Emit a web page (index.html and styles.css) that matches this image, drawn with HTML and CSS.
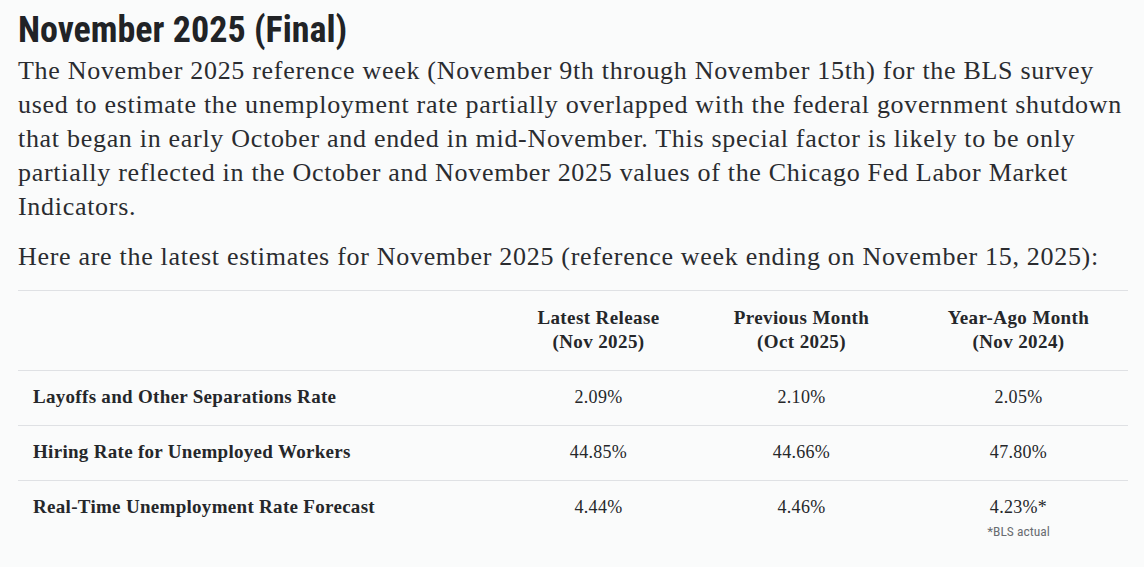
FILE: index.html
```html
<!DOCTYPE html>
<html lang="en">
<head>
<meta charset="utf-8">
<title>November 2025 (Final)</title>
<link rel="stylesheet" href="styles.css">
</head>
<body>
<main class="page">
  <h2 class="title">November 2025 (Final)</h2>
  <p class="lead">The November 2025 reference week (November 9th through November 15th) for the BLS survey used to estimate the unemployment rate partially overlapped with the federal government shutdown that began in early October and ended in mid-November. This special factor is likely to be only partially reflected in the October and November 2025 values of the Chicago Fed Labor Market Indicators.</p>
  <p class="lead intro">Here are the latest estimates for November 2025 (reference week ending on November 15, 2025):</p>
  <table class="data">
    <colgroup>
      <col class="c-label">
      <col class="c-1">
      <col class="c-2">
      <col class="c-3">
    </colgroup>
    <thead>
      <tr>
        <th class="label"></th>
        <th>Latest Release<br>(Nov 2025)</th>
        <th>Previous Month<br>(Oct 2025)</th>
        <th>Year-Ago Month<br>(Nov 2024)</th>
      </tr>
    </thead>
    <tbody>
      <tr>
        <td class="label">Layoffs and Other Separations Rate</td>
        <td>2.09%</td>
        <td>2.10%</td>
        <td>2.05%</td>
      </tr>
      <tr>
        <td class="label">Hiring Rate for Unemployed Workers</td>
        <td>44.85%</td>
        <td>44.66%</td>
        <td>47.80%</td>
      </tr>
      <tr class="last">
        <td class="label">Real-Time Unemployment Rate Forecast</td>
        <td>4.44%</td>
        <td>4.46%</td>
        <td>4.23%*<span class="note">*BLS actual</span></td>
      </tr>
    </tbody>
  </table>
</main>
</body>
</html>
```
FILE: styles.css
```css
html, body {
  margin: 0;
  padding: 0;
  background: #fafbfb;
  color: #25272a;
}
.page {
  padding: 9px 16px 0 18px;
}
.title {
  margin: 0;
  font-family: "Roboto Condensed", "Liberation Sans Narrow", "Roboto", sans-serif;
  font-stretch: condensed;
  font-weight: 700;
  font-size: 36px;
  line-height: 42px;
  color: #212326;
}
.lead {
  margin: 3px 0 0;
  font-family: "Liberation Serif", serif;
  font-size: 26px;
  letter-spacing: 0.7px;
  line-height: 34px;
  color: #2a2c30;
}
.intro {
  margin-top: 16px;
}
.data {
  width: 1110px;
  margin-top: 16px;
  border-collapse: collapse;
  table-layout: fixed;
  font-family: "Liberation Serif", serif;
  color: #25272a;
}
.c-label { width: 485px; }
.c-1 { width: 191px; }
.c-2 { width: 215px; }
.c-3 { width: 219px; }
.data th, .data td {
  text-align: center;
  border-top: 1px solid #dfe1e4;
  padding: 0;
}
.data th {
  font-size: 19px;
  letter-spacing: 0.4px;
  font-weight: 700;
  line-height: 24px;
  padding: 15px 0 16px;
}
.data td {
  font-size: 18px;
  letter-spacing: 0.3px;
  line-height: 24px;
  padding: 14px 0 16px;
  vertical-align: top;
}
.data td.label {
  text-align: left;
  font-size: 19px;
  letter-spacing: 0.3px;
  font-weight: 700;
  padding-left: 15px;
}
.note {
  display: block;
  font-family: "Roboto Condensed", "Liberation Sans Narrow", "Roboto", sans-serif;
  font-stretch: condensed;
  font-size: 13.5px;
  letter-spacing: 0;
  line-height: 16px;
  color: #6a6d71;
  padding-top: 4px;
}
```
